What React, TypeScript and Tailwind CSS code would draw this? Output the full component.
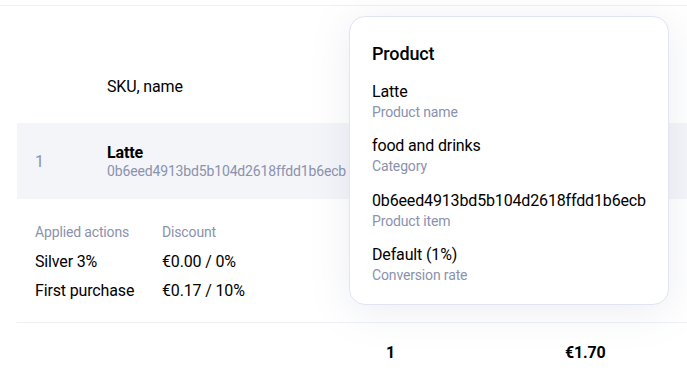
import React from "react";

const details = [
  { value: "Latte", label: "Product name" },
  { value: "food and drinks", label: "Category" },
  { value: "0b6eed4913bd5b104d2618ffdd1b6ecb", label: "Product item" },
  { value: "Default (1%)", label: "Conversion rate" },
];

const actions = [
  { name: "Silver 3%", discount: "€0.00 / 0%" },
  { name: "First purchase", discount: "€0.17 / 10%" },
];

export default function App() {
  return (
    <div
      className="relative h-[380px] w-[687px] overflow-hidden bg-white tracking-[-0.15px] text-black"
      style={{ fontFamily: "Roboto, 'Liberation Sans', sans-serif" }}
    >
      {/* top rule */}
      <div className="h-[6px] border-b border-[#eef0f4]" />

      <div className="ml-[17px]">
        {/* header */}
        <div className="flex h-[117px] items-end pb-[26px]">
          <div className="w-[90px]" />
          <span className="text-base leading-5">SKU, name</span>
        </div>

        {/* product row */}
        <div className="flex h-[76px] items-center bg-[#f4f5f9]">
          <span className="w-[90px] pl-[18px] pt-[2px] text-base text-[#8a92ad]">1</span>
          <div className="flex flex-col">
            <span className="text-base font-bold leading-5">Latte</span>
            <span className="text-sm leading-4 text-[#8a92ad]">0b6eed4913bd5b104d2618ffdd1b6ecb</span>
          </div>
        </div>

        {/* applied actions */}
        <div className="h-[124px] border-b border-[#eef0f6] pl-[18px] pt-[25px]">
          <div className="grid grid-cols-[127px_auto] gap-y-[9px]">
            <span className="mb-[3px] text-sm leading-4 text-[#8a92ad]">Applied actions</span>
            <span className="mb-[3px] text-sm leading-4 text-[#8a92ad]">Discount</span>
            {actions.map((a) => (
              <React.Fragment key={a.name}>
                <span className="text-base leading-5">{a.name}</span>
                <span className="text-base leading-5">{a.discount}</span>
              </React.Fragment>
            ))}
          </div>
        </div>

        {/* totals */}
        <div className="flex pt-[20px]">
          <span className="ml-[369px] w-[179px] text-base font-bold leading-5">1</span>
          <span className="text-base font-bold leading-5">€1.70</span>
        </div>
      </div>

      {/* product popover */}
      <div className="absolute left-[349px] top-[16px] h-[289px] w-[320px] rounded-2xl border border-[#e1e5f2] bg-white px-[22px] pt-[25px] shadow-[0_6px_40px_rgba(120,130,170,0.14)]">
        <p className="text-lg font-medium leading-6">Product</p>
        <div className="mt-[16px] flex flex-col gap-[14.3px]">
          {details.map((d) => (
            <div key={d.label} className="flex flex-col">
              <span className="text-base leading-5">{d.value}</span>
              <span className="text-sm leading-5 text-[#8a92ad]">{d.label}</span>
            </div>
          ))}
        </div>
      </div>
    </div>
  );
}
